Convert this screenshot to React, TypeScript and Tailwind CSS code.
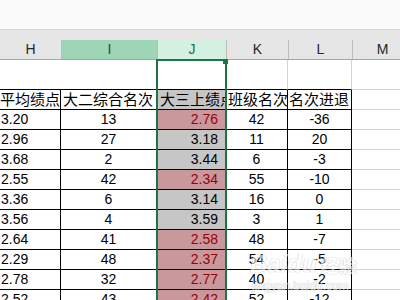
import React from "react";

const W = ["w-[61px]", "w-[96px]", "w-[69px]", "w-[62px]", "w-[64px]", "w-[60px]"];

type Row = { h: string; i: string; j: string; bad: boolean; k: string; l: string };

const rows: Row[] = [
  { h: "3.20", i: "13", j: "2.76", bad: true, k: "42", l: "-36" },
  { h: "2.96", i: "27", j: "3.18", bad: false, k: "11", l: "20" },
  { h: "3.68", i: "2", j: "3.44", bad: false, k: "6", l: "-3" },
  { h: "2.55", i: "42", j: "2.34", bad: true, k: "55", l: "-10" },
  { h: "3.36", i: "6", j: "3.14", bad: false, k: "16", l: "0" },
  { h: "3.56", i: "4", j: "3.59", bad: false, k: "3", l: "1" },
  { h: "2.64", i: "41", j: "2.58", bad: true, k: "48", l: "-7" },
  { h: "2.29", i: "48", j: "2.37", bad: true, k: "54", l: "-5" },
  { h: "2.78", i: "32", j: "2.77", bad: true, k: "40", l: "-2" },
  { h: "2.52", i: "43", j: "2.42", bad: true, k: "52", l: "-12" },
];

const cell = "h-full shrink-0 border-r border-b border-black flex items-center";

export default function App() {
  return (
    <div className="w-[400px] h-[300px] overflow-hidden bg-white text-black font-['Liberation_Sans','Noto_Sans_CJK_SC',sans-serif] relative">
      {/* toolbar remains */}
      <div className="h-[30px] bg-[#fbfbfb] border-b border-[#d6d6d6]" />
      <div className="h-[10px] bg-[#e6e6e6]" />

      {/* column letters */}
      <div className="flex h-[20px] bg-[#e6e6e6] border-b border-[#a6a6a6] text-[14px]">
        <div className={`${W[0]} shrink-0 flex items-center justify-center text-[#262626]`}>H</div>
        <div className={`${W[1]} shrink-0 flex items-center justify-center bg-[#9fd5b7] text-[#0e5c2f] border-l border-[#bcbcbc]`}>I</div>
        <div className={`${W[2]} shrink-0 flex items-center justify-center bg-[#d3f0e0] text-[#217346] border-l border-[#bcbcbc]`}>J</div>
        <div className={`${W[3]} shrink-0 flex items-center justify-center text-[#262626] border-l border-[#bcbcbc]`}>K</div>
        <div className={`${W[4]} shrink-0 flex items-center justify-center text-[#262626] border-l border-[#bcbcbc]`}>L</div>
        <div className={`${W[5]} shrink-0 flex items-center justify-center text-[#262626] border-l border-[#bcbcbc]`}>M</div>
      </div>

      <div className="relative">
        {/* empty row */}
        <div className="flex h-[30px]">
          <div className={`${W[0]} shrink-0 border-b border-black`} />
          <div className={`${W[1]} shrink-0 border-b border-black`} />
          <div className={`${W[2]} shrink-0 border-b border-black`} />
          <div className={`${W[3]} shrink-0 border-b border-b-black border-r border-r-[#d4d4d4]`} />
          <div className={`${W[4]} shrink-0 border-b border-b-black border-r border-r-[#d4d4d4]`} />
          <div className={`${W[5]} shrink-0 border-b border-[#d4d4d4]`} />
        </div>

        {/* table header */}
        <div className="flex h-[20px] text-[15px] leading-none whitespace-nowrap">
          <div className={`${W[0]} ${cell} overflow-hidden`}>平均绩点</div>
          <div className={`${W[1]} ${cell} overflow-hidden pl-[2px]`}>大二综合名次</div>
          <div className={`${W[2]} ${cell} overflow-hidden pl-[3px] bg-[#c6c6c6]`}>大三上绩点</div>
          <div className={`${W[3]} ${cell} overflow-hidden pl-[2px]`}>班级名次</div>
          <div className={`${W[4]} ${cell} overflow-hidden pl-[1px]`}>名次进退</div>
          <div className={`${W[5]} h-full shrink-0 border-b border-[#d4d4d4]`} />
        </div>

        {rows.map((r, n) => (
          <div key={n} className="flex h-[20px] text-[14px]">
            <div className={`${W[0]} ${cell} pl-[1px]`}>{r.h}</div>
            <div className={`${W[1]} ${cell} justify-center`}>{r.i}</div>
            <div
              className={`${W[2]} ${cell} justify-end pr-[7px] ${
                r.bad ? "bg-[#c8989d] text-[#9c0006]" : "bg-[#c6c6c6]"
              }`}
            >
              {r.j}
            </div>
            <div className={`${W[3]} ${cell} justify-center`}>{r.k}</div>
            <div className={`${W[4]} ${cell} justify-center`}>{r.l}</div>
            <div className={`${W[5]} h-full shrink-0 border-b border-[#d4d4d4]`} />
          </div>
        ))}

        {/* selection around column J */}
        <div className="absolute left-[156px] top-[-1px] w-[71px] h-[400px] border-2 border-[#217346]" />
        <div className="absolute left-[223px] top-[-1px] w-[5px] h-[5px] bg-[#217346]" />
      </div>

      {/* watermark */}
      <div className="absolute left-[250px] top-[252px] flex flex-col items-start text-white opacity-60 [text-shadow:0_0_1px_#a0a0a0,0_0_1px_#a0a0a0]">
        <div className="flex items-end gap-[4px] font-bold italic text-[24px] leading-none">
          <span>Baidu</span>
          <span className="not-italic text-[18px]">经验</span>
        </div>
        <div className="text-[12px] leading-none mt-[4px] pl-[2px]">jingyan.baidu.com</div>
      </div>
    </div>
  );
}
